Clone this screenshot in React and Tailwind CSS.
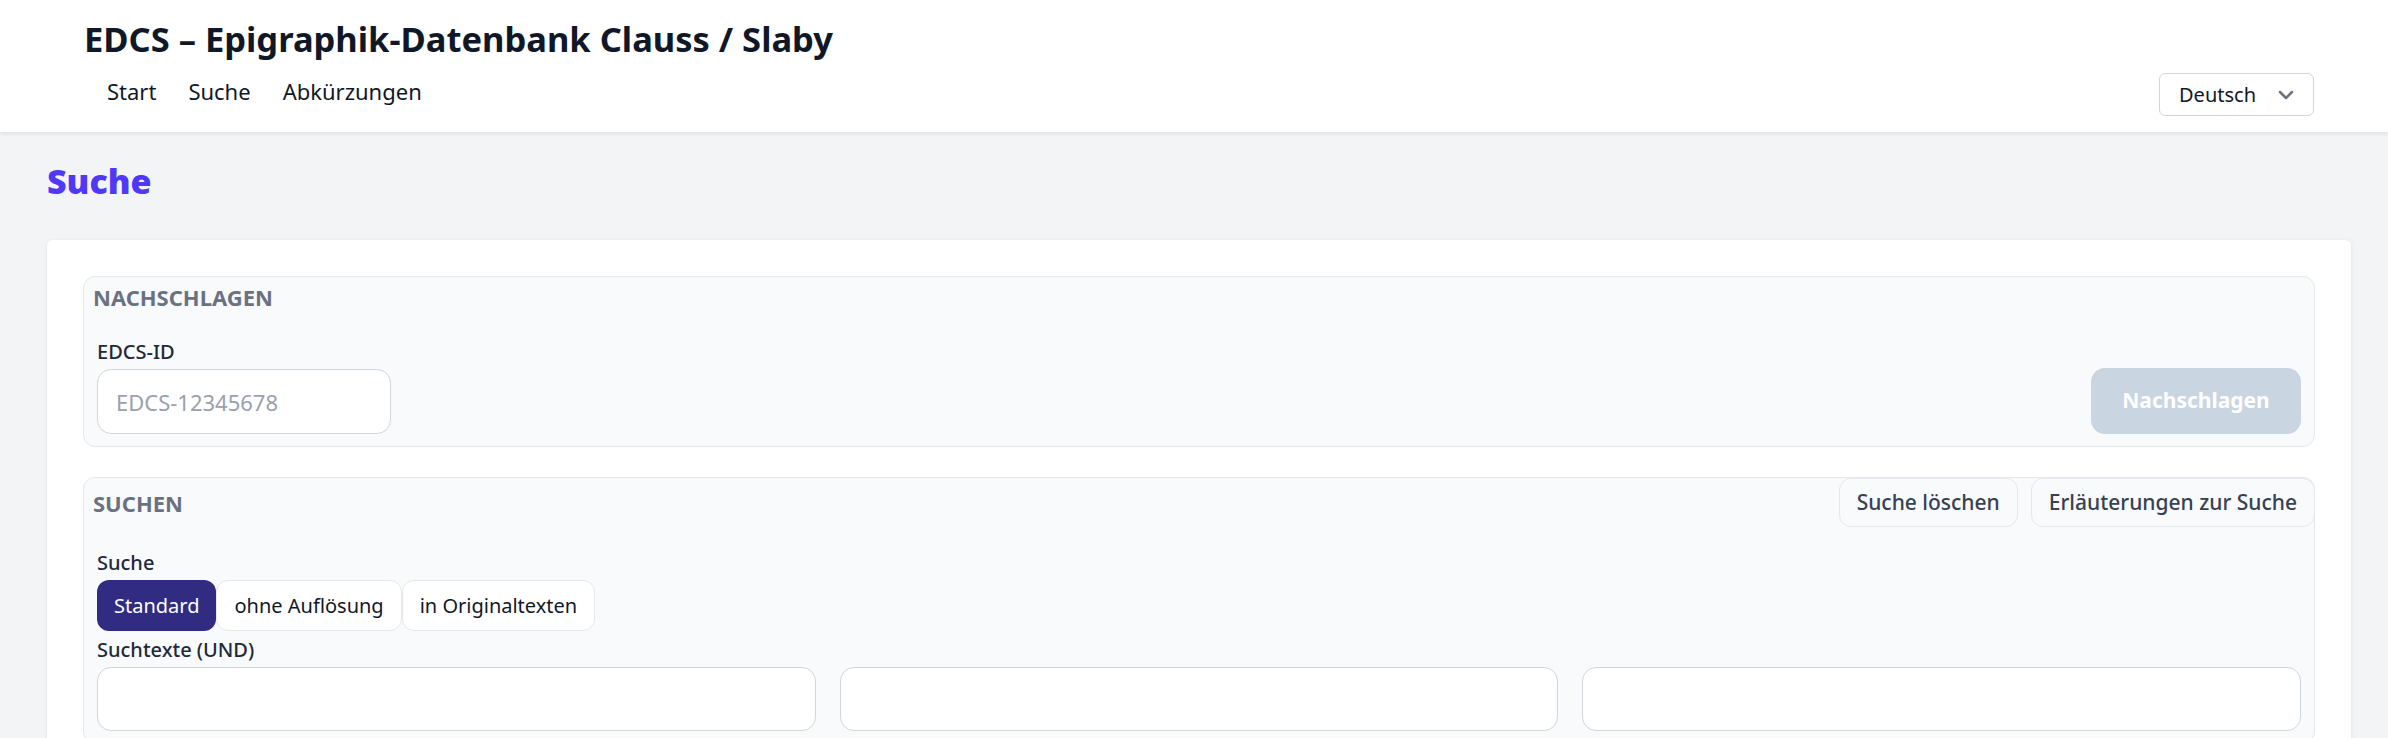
import React from "react";

const font = { fontFamily: '"Noto Sans", "Open Sans", sans-serif' };

function SectionBox({ title, actions, children }) {
  return (
    <div className="rounded-[12px] border border-gray-200 bg-[#f8fafc]">
      {actions ? (
        <div className="flex items-center justify-between">
          <h3 className="pl-[9px] text-[22px] font-bold leading-[30px] text-gray-500">{title}</h3>
          {actions}
        </div>
      ) : (
        <h3 className="pl-[9px] pt-[5px] text-[22px] font-bold leading-[30px] text-gray-500">{title}</h3>
      )}
      {children}
    </div>
  );
}

export default function App() {
  const segments = ["Standard", "ohne Auflösung", "in Originaltexten"];

  return (
    <div className="min-h-screen bg-gray-100" style={font}>
      {/* header */}
      <header className="h-[132px] bg-white pl-[84px] pr-[74px] shadow-[0_2px_4px_rgba(0,0,0,0.08)]">
        <h1 className="pt-[18px] text-[34.5px] font-bold leading-[42px] text-gray-900">
          EDCS – Epigraphik-Datenbank Clauss / Slaby
        </h1>
        <div className="mt-[13px] flex items-start justify-between">
          <nav className="flex text-[22px] leading-[36px] text-gray-900">
            <a className="pl-[23px] pr-[16px]">Start</a>
            <a className="px-[16px]">Suche</a>
            <a className="px-[16px]">Abkürzungen</a>
          </nav>
          <button className="flex h-[43px] w-[155px] items-center justify-between rounded-[6px] border border-gray-300 bg-white pl-[19px] pr-[19px] text-[20px] text-gray-900">
            Deutsch
            <svg width="16" height="10" viewBox="0 0 16 10" fill="none" stroke="#6b7280" strokeWidth="2.5" strokeLinecap="round" strokeLinejoin="round">
              <path d="M2 2l6 6 6-6" />
            </svg>
          </button>
        </div>
      </header>

      <main className="pl-[47px] pr-[37px]">
        <h2 className="pt-[28px] text-[34px] font-black leading-[43px] text-indigo-600">Suche</h2>

        <div className="mt-[37px] rounded-[6px] bg-white p-[36px] shadow-[0_1px_4px_rgba(0,0,0,0.08)]">
          <SectionBox title="NACHSCHLAGEN">
            <div className="flex items-end justify-between px-[13px] pb-[12px] pt-[26px]">
              <div>
                <label className="block text-[20px] font-medium leading-[28px] text-gray-800">EDCS-ID</label>
                <input
                  placeholder="EDCS-12345678"
                  className="mt-[3px] h-[65px] w-[294px] rounded-[14px] border border-gray-300 bg-white px-[18px] text-[22px] text-gray-800 placeholder:text-gray-400"
                />
              </div>
              <button className="h-[66px] w-[210px] rounded-[14px] bg-slate-300 text-[21px] font-bold text-white">
                Nachschlagen
              </button>
            </div>
          </SectionBox>

          <div className="mt-[30px]">
            <SectionBox
              title="SUCHEN"
              actions={
                <div className="-mr-px flex gap-[13px]">
                  <button className="h-[49px] rounded-[12px] border border-gray-200 bg-[#f8fafc] px-[17px] text-[21px] font-medium text-gray-700">
                    Suche löschen
                  </button>
                  <button className="h-[49px] rounded-[12px] border border-gray-200 bg-[#f8fafc] px-[17px] text-[21px] font-medium text-gray-700">
                    Erläuterungen zur Suche
                  </button>
                </div>
              }
            >
              <div className="px-[13px] pb-[12px] pt-[22px]">
                <label className="block text-[20px] font-medium leading-[28px] text-gray-800">Suche</label>
                <div className="mt-[3px] flex">
                  {segments.map((s, i) => (
                    <button
                      key={s}
                      className={
                        i === 0
                          ? "h-[51px] rounded-[12px] bg-[#312c81] px-[17px] text-[20px] text-white"
                          : "h-[51px] rounded-[12px] border border-gray-200 bg-white px-[17px] text-[20px] text-gray-900"
                      }
                    >
                      {s}
                    </button>
                  ))}
                </div>
                <label className="mt-[5px] block text-[20px] font-medium leading-[28px] text-gray-800">Suchtexte (UND)</label>
                <div className="mt-[3px] grid grid-cols-3 gap-[24px]">
                  <input className="h-[64px] rounded-[14px] border border-gray-300 bg-white" />
                  <input className="h-[64px] rounded-[14px] border border-gray-300 bg-white" />
                  <input className="h-[64px] rounded-[14px] border border-gray-300 bg-white" />
                </div>
              </div>
            </SectionBox>
          </div>
        </div>
      </main>
    </div>
  );
}
